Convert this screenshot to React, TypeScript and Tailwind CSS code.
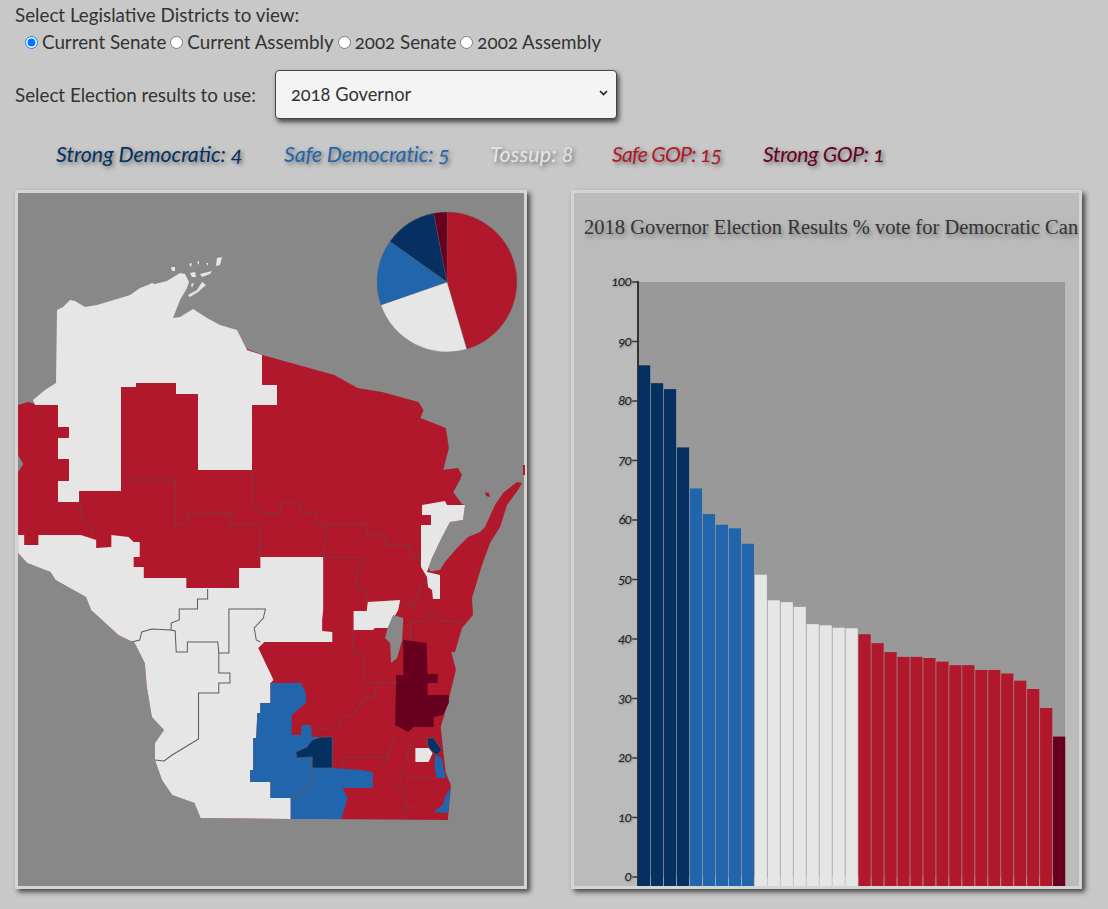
import React from 'react';

const DARK_BLUE = '#053061';
const BLUE = '#2166ac';
const LIGHT = '#e6e6e6';
const RED = '#b2182b';
const DARK_RED = '#67001f';

const legend = [
  { label: 'Strong Democratic: 4', color: 'text-[#053061]', width: 'w-[228px]' },
  { label: 'Safe Democratic: 5', color: 'text-[#2166ac] tracking-[-0.1px]', width: 'w-[206px]' },
  { label: 'Tossup: 8', color: 'text-[#e6e6e6] tracking-[0.2px]', width: 'w-[122px]' },
  { label: 'Safe GOP: 15', color: 'text-[#b2182b] tracking-[-0.8px]', width: 'w-[151px]' },
  { label: 'Strong GOP: 1', color: 'text-[#67001f] tracking-[-0.4px]', width: 'w-[140px]' },
];

const pieSlices = [
  { count: 15, color: RED },
  { count: 8, color: LIGHT },
  { count: 5, color: BLUE },
  { count: 4, color: DARK_BLUE },
  { count: 1, color: DARK_RED },
];

const barValues = [
  86, 83, 82, 72.2, 65.3, 61, 59.2, 58.6, 56, 50.8, 46.5, 46.2, 45.4, 42.5, 42.3, 41.9, 41.8, 40.8, 39.3, 37.8, 37, 37,
  36.8, 36.2, 35.6, 35.6, 34.8, 34.8, 34.2, 33, 31.6, 28.4, 23.6,
];

const barColor = (i: number) => {
  if (i < 4) return DARK_BLUE;
  if (i < 9) return BLUE;
  if (i < 17) return LIGHT;
  if (i < 32) return RED;
  return DARK_RED;
};

// these go inside the stretched group below
const statePoints =
  '18,405 28,402 35,404 60,404 60,330 170,325 235,345 259,355 330,375 353,388 377,392 413,402 418,410 415,418 440,428 443,448 437,472 452,470 455,478 443,500 440,520 420,560 440,610 445,650 450,670 442,703 435,727 437,747 440,773 445,785 442,820 198,818 192,803 170,795 160,780 153,760 153,743 162,730 150,717 145,687 143,663 133,643 117,635 90,610 85,597 55,580 50,572 27,563 18,553 18,472 23,464 18,455';

const lightAreas = [
  // south west
  '18,535 24,535 24,545 38,545 38,535 80,535 95,540 95,548 110,547 110,535 127,537 132,542 138,542 138,557 132,557 132,567 142,567 142,578 184,578 184,588 236,588 236,568 257,568 257,557 319,557 319,610 318,620 318,631 328,632 328,642 261,642 255,648 270,680 267,683 267,703 257,703 257,713 254,713 253,738 250,738 250,770 247,770 247,782 267,782 267,798 287,798 287,819 198,818 192,803 170,795 160,780 153,760 153,743 162,730 150,717 145,687 143,663 133,643 117,635 90,610 85,597 55,580 50,572 27,563 18,553',
  // oshkosh
  '349,611 362,611 363,602 395,600 393,610 383,628 370,628 368,630 349,630',
  // waukesha
  '410,748 423,748 427,753 423,762 410,762',
];

const blueAreas = [
  '267,683 297,683 302,693 302,703 288,715 288,735 297,735 298,725 307,725 308,737 328,737 328,768 357,770 368,772 368,788 338,788 343,798 337,819 287,819 287,798 267,798 267,782 247,782 247,770 250,770 250,738 253,738 254,713 257,713 257,703 267,703',
  '429,755 436,758 439,773 440,778 431,778 429,767',
  '445,788 442,813 428,812 437,805 440,795',
];

const darkBlueAreas = [
  '317,737 328,737 328,768 308,768 308,757 293,758 292,752 303,747 308,740',
  '422,738 428,738 436,750 431,755 427,752 422,745',
];

const darkRedArea =
  '398,640 421,643 422,674 432,674 432,683 422,683 422,695 443,695 443,703 437,715 428,717 428,727 408,727 403,732 390,725 391,675 398,675';

const lake = '388,615 398,618 397,640 392,658 386,663 385,643 380,638 383,627';

const redBorders = [
  '120,480 173,480 173,525 185,524 185,514 227,513 227,525 257,524 257,557',
  '78,492 80,518 93,528 90,535',
  '249,470 250,505 257,513 277,513 278,502 297,502 297,513 312,513 312,525 363,524 363,535 380,535 382,545 405,545 405,557 413,557 420,572 422,582',
  '322,525 320,557',
  '319,557 357,557 360,563 353,568 352,587 362,590 362,602',
  '395,600 407,608 415,585 422,582',
  '405,640 405,623 423,620 423,612 432,612 432,620 457,623',
  '349,630 348,650 358,655 360,683 392,683',
  '372,685 370,697 360,698 348,715 337,717 335,727 310,730',
  '390,737 385,750 377,768',
  '338,768 338,757 383,757',
  '407,740 403,753 393,787 400,788 400,819',
  '400,778 430,778',
  '400,807 410,807',
];

const lightBorders = [
  '205,589 205,599 195,599 195,609 177,609 177,620 169,623 169,630 173,631 174,652 185,652 185,642 215,642 216,653 226,653 226,609 262,609 260,618 251,628 253,640 257,642',
  '169,630 150,629 140,632 138,640 130,642',
  '216,653 216,673 227,673 227,683 216,683 216,693 196,693 196,739 183,747 170,755 162,761 153,760',
  '287,798 307,787 308,757',
];

// these are in plain page coordinates
const northArea =
  '33,400 45,390 56,383 57,310 63,307 70,300 75,301 85,307 97,305 117,299 130,295 140,288 148,285 152,283 155,284 167,281 180,273 185,274 189,282 187,288 180,300 173,318 180,317 193,309 207,318 220,325 237,330 247,350 262,355 262,385 277,385 277,405 252,405 252,470 198,470 198,394 176,394 176,383 136,383 136,387 121,387 121,491 79,491 79,502 58,502 58,481 69,481 69,459 58,459 58,438 69,438 69,427 58,427 58,405 35,405';

const islands = [
  '217,258 222,257 220,265 216,266',
  '190,273 195,272 196,277 192,277',
  '200,274 212,271 210,274 202,277',
  '188,295 197,290 202,282 206,285 198,292 190,297',
  '171,267 175,267 175,271 172,271',
  '189,264 192,263 191,267',
  '197,262 199,261 199,265',
  '206,263 208,263 208,266',
  '191,284 194,283 192,288',
];

const doorPeninsula =
  '400,470 442,470 458,468 462,475 453,492 462,504 465,505 463,520 450,522 442,537 432,558 427,572 440,570 445,562 457,548 468,537 480,532 485,527 495,505 503,493 517,482 522,483 518,490 507,505 500,527 490,543 482,565 472,598 473,615 462,628 455,652 400,652';

const doorLight =
  '422,505 445,501 447,505 465,505 463,520 450,522 442,537 432,558 427,572 440,575 440,599 433,599 432,590 428,587 427,577 421,567 421,525 431,525 431,515 422,515';

const polarPoint = (angle: number, r: number) => {
  const rad = (angle * Math.PI) / 180;
  return `${447 + r * Math.sin(rad)} ${282 - r * Math.cos(rad)}`;
};

const Pie = () => {
  let start = 0;
  return (
    <g>
      {pieSlices.map((slice) => {
        const sweep = (slice.count / 33) * 360;
        const end = start + sweep;
        const d = `M447 282 L${polarPoint(start, 70)} A70 70 0 0 1 ${polarPoint(end, 70)} Z`;
        start = end;
        return <path key={slice.color} d={d} fill={slice.color} stroke="#666" strokeWidth={0.3} />;
      })}
    </g>
  );
};

const DistrictMap = () => (
  <svg className="block w-[507px] h-[693px]" viewBox="18 193 507 693">
    <polygon points={doorPeninsula} fill={RED} />
    <g transform="translate(10 0) scale(1.0135 1) translate(-10 0)">
      <polygon points={statePoints} fill={RED} />
      {lightAreas.map((p) => (
        <polygon key={p} points={p} fill={LIGHT} />
      ))}
      {blueAreas.map((p) => (
        <polygon key={p} points={p} fill={BLUE} />
      ))}
      {darkBlueAreas.map((p) => (
        <polygon key={p} points={p} fill={DARK_BLUE} stroke="#666" strokeWidth={0.6} />
      ))}
      <polygon points={darkRedArea} fill={DARK_RED} />
      <polygon points={lake} fill="#888888" />
      {redBorders.map((p) => (
        <polyline key={p} points={p} fill="none" stroke="#7c3a44" strokeWidth={1} />
      ))}
      {lightBorders.map((p) => (
        <polyline key={p} points={p} fill="none" stroke="#5c5c5c" strokeWidth={1} />
      ))}
    </g>
    <polygon points={northArea} fill={LIGHT} />
    <polygon points={doorLight} fill={LIGHT} />
    {islands.map((p) => (
      <polygon key={p} points={p} fill={LIGHT} />
    ))}
    <polygon points="485,492 489,493 490,497 486,496" fill={RED} />
    <polygon points="523,465 525,465 525,475 523,475" fill={RED} />
    <Pie />
  </svg>
);

const BarChart = () => (
  <svg className="block w-[505px] h-[631px]" viewBox="574 255 505 631">
    <rect x={638} y={282} width={427} height={595} fill="#999999" />
    <line x1={638} y1={281} x2={638} y2={886} stroke="#333" strokeWidth={2} />
    {[0, 10, 20, 30, 40, 50, 60, 70, 80, 90, 100].map((tick) => {
      const y = 877 - tick * 5.95;
      return (
        <g key={tick}>
          <line x1={632} y1={y} x2={638} y2={y} stroke="#333" strokeWidth={1.5} />
          <text
            x={631}
            y={y + 4}
            textAnchor="end"
            fill="#222"
            className="font-['Lato',sans-serif] text-[14px] italic tracking-[-1px] oldstyle-nums [text-shadow:1px_1px_2px_#888]"
          >
            {tick}
          </text>
        </g>
      );
    })}
    {barValues.map((value, i) => (
      <rect
        key={i}
        x={638 + i * 12.97}
        y={877 - value * 5.95}
        width={12.2}
        height={value * 5.95 + 9}
        fill={barColor(i)}
      />
    ))}
  </svg>
);

export default function App() {
  return (
    <div className="min-h-[909px] bg-[#c8c8c8] pl-[15px] font-['Lato','Open_Sans',sans-serif] text-[#333] oldstyle-nums overflow-hidden">
      <div className="pt-[3px] text-[18.8px] leading-[23px]">Select Legislative Districts to view:</div>
      <div className="flex items-center h-[27px] mt-[3px] pl-[10px] text-[18.8px]">
        <input type="radio" name="districts" defaultChecked className="w-[13px] h-[13px] m-0 mr-[4px]" />
        <label className="mr-[4px]">Current Senate</label>
        <input type="radio" name="districts" className="w-[13px] h-[13px] m-0 mr-[4px]" />
        <label className="mr-[4px]">Current Assembly</label>
        <input type="radio" name="districts" className="w-[13px] h-[13px] m-0 mr-[4px]" />
        <label className="mr-[4px]">2002 Senate</label>
        <input type="radio" name="districts" className="w-[13px] h-[13px] m-0 mr-[4px]" />
        <label>2002 Assembly</label>
      </div>

      <div className="flex items-center mt-[14px]">
        <label className="w-[260px] pt-[2px] text-[18.8px]">Select Election results to use:</label>
        <div className="relative w-[342px] h-[49px]">
          <select className="w-full h-full appearance-none pl-[15px] pr-[8px] text-[18.3px] text-[#333] bg-[#f4f4f4] border border-[#444] rounded-[4px] shadow-[2px_3px_5px_#444]">
            <option>2018 Governor</option>
          </select>
          <svg
            className="absolute right-[9px] top-[20px] w-[9px] h-[6px] pointer-events-none"
            viewBox="0 0 9 6"
            fill="none"
            stroke="#222"
            strokeWidth={1.7}
          >
            <path d="M1 1l3.5 3.5L8 1" />
          </svg>
        </div>
      </div>

      <div className="flex items-center h-[30px] mt-[21px] pl-[41px] text-[21.3px] italic [text-shadow:2px_2px_4px_#666]">
        {legend.map((item) => (
          <span key={item.label} className={`${item.width} ${item.color} shrink-0 whitespace-nowrap`}>
            {item.label}
          </span>
        ))}
      </div>

      <div className="flex gap-[44px] mt-[20px]">
        <div className="w-[512px] h-[699px] shrink-0 bg-[#888888] border-[3px] border-[#d4d4d4] shadow-[3px_3px_5px_#444]">
          <DistrictMap />
        </div>
        <div className="w-[511px] h-[699px] shrink-0 bg-[#bbbbbb] border-[3px] border-[#d4d4d4] shadow-[3px_3px_5px_#444] overflow-hidden">
          <div className="h-[62px] pt-[20px] pl-[10px] whitespace-nowrap font-['Liberation_Serif',serif] text-[20.5px] leading-[28px] text-[#333] [text-shadow:2px_3px_4px_#777]">
            2018 Governor Election Results % vote for Democratic Can
          </div>
          <BarChart />
        </div>
      </div>
    </div>
  );
}
